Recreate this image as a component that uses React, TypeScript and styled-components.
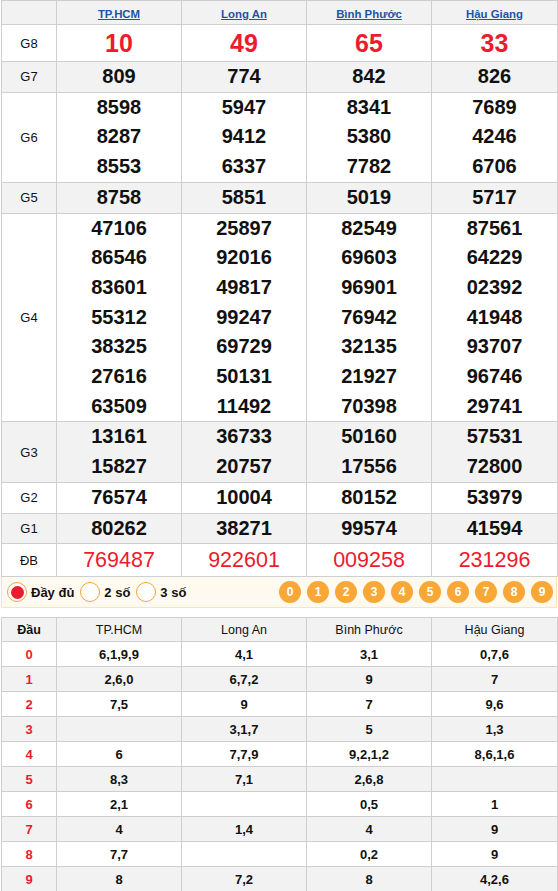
import React from "react";
import styled, { createGlobalStyle } from "styled-components";

const Global = createGlobalStyle`
  html, body { margin: 0; padding: 0; background: #fff; }
  body { font-family: "Liberation Sans", Arial, sans-serif; color: #000; }
`;

const RED = "#ec1b2e";
const GREY = "#f2f2f2";
const BORDER = "#cfcfcf";

const Page = styled.div`
  width: 556px;
  padding: 0 1px;
`;

const Table = styled.table`
  width: 556px;
  table-layout: fixed;
  border-collapse: collapse;
  font-family: "Liberation Sans", Arial, sans-serif;
`;

const Row = styled.tr<{ $grey?: boolean }>`
  background: ${(p) => (p.$grey ? GREY : "#fff")};
`;

const HeadCell = styled.th<{ $h: number }>`
  border: 1px solid ${BORDER};
  height: ${(p) => p.$h}px;
  padding: 0;
  text-align: center;
  vertical-align: middle;
  font-weight: normal;
`;

const ProvinceLink = styled.a`
  color: #1b55a6;
  font-size: 11.4px;
  font-weight: bold;
  text-decoration: underline;
`;

const LabelCell = styled.td`
  border: 1px solid ${BORDER};
  padding: 0;
  text-align: center;
  vertical-align: middle;
  font-size: 13px;
  color: #111;
`;

const NumCell = styled.td`
  border: 1px solid ${BORDER};
  padding: 0;
  text-align: center;
  vertical-align: middle;
`;

const Num = styled.div<{ $kind: "g8" | "db" | "normal" }>`
  font-weight: ${(p) => (p.$kind === "db" ? "normal" : "bold")};
  font-size: ${(p) => (p.$kind === "g8" ? "25px" : p.$kind === "db" ? "21.5px" : "20px")};
  line-height: ${(p) => (p.$kind === "g8" ? "36px" : p.$kind === "db" ? "32px" : "29.7px")};
  color: ${(p) => (p.$kind === "normal" ? "#111" : RED)};
`;

const FilterBar = styled.div`
  display: flex;
  align-items: center;
  height: 30px;
  background: #fffaf0;
  border: 1px solid #fde2bb;
  border-top: none;
  padding: 0 3px 0 5px;
`;

const RadioOption = styled.label`
  display: flex;
  align-items: center;
  gap: 4px;
  margin-right: 6px;
  font-size: 13px;
  font-weight: bold;
  color: #111;
`;

const RadioCircle = styled.span<{ $checked?: boolean }>`
  box-sizing: border-box;
  width: 20px;
  height: 20px;
  border-radius: 50%;
  border: 1px solid #f5a53a;
  background: #fff;
  display: flex;
  align-items: center;
  justify-content: center;
  &::after {
    content: "";
    display: ${(p) => (p.$checked ? "block" : "none")};
    width: 13px;
    height: 13px;
    border-radius: 50%;
    background: ${RED};
  }
`;

const Balls = styled.div`
  margin-left: auto;
  display: flex;
  gap: 6px;
`;

const Ball = styled.span`
  width: 22px;
  height: 22px;
  border-radius: 50%;
  background: #f9a736;
  color: #fff;
  font-size: 12px;
  font-weight: bold;
  display: flex;
  align-items: center;
  justify-content: center;
`;

const Spacer = styled.div`
  height: 9px;
`;

const LotoHead = styled.th<{ $bold?: boolean }>`
  border: 1px solid ${BORDER};
  height: 23px;
  padding: 0;
  text-align: center;
  vertical-align: middle;
  font-size: 12.5px;
  font-weight: ${(p) => (p.$bold ? "bold" : "normal")};
  color: #111;
`;

const LotoCell = styled.td<{ $red?: boolean }>`
  border: 1px solid ${BORDER};
  height: 24px;
  padding: 0;
  text-align: center;
  vertical-align: middle;
  font-size: 13px;
  font-weight: bold;
  color: ${(p) => (p.$red ? RED : "#111")};
`;

const provinces = ["TP.HCM", "Long An", "Bình Phước", "Hậu Giang"];

type Prize = { label: string; kind: "g8" | "db" | "normal"; values: string[][] };

const prizes: Prize[] = [
  { label: "G8", kind: "g8", values: [["10"], ["49"], ["65"], ["33"]] },
  { label: "G7", kind: "normal", values: [["809"], ["774"], ["842"], ["826"]] },
  {
    label: "G6",
    kind: "normal",
    values: [
      ["8598", "8287", "8553"],
      ["5947", "9412", "6337"],
      ["8341", "5380", "7782"],
      ["7689", "4246", "6706"],
    ],
  },
  { label: "G5", kind: "normal", values: [["8758"], ["5851"], ["5019"], ["5717"]] },
  {
    label: "G4",
    kind: "normal",
    values: [
      ["47106", "86546", "83601", "55312", "38325", "27616", "63509"],
      ["25897", "92016", "49817", "99247", "69729", "50131", "11492"],
      ["82549", "69603", "96901", "76942", "32135", "21927", "70398"],
      ["87561", "64229", "02392", "41948", "93707", "96746", "29741"],
    ],
  },
  {
    label: "G3",
    kind: "normal",
    values: [
      ["13161", "15827"],
      ["36733", "20757"],
      ["50160", "17556"],
      ["57531", "72800"],
    ],
  },
  { label: "G2", kind: "normal", values: [["76574"], ["10004"], ["80152"], ["53979"]] },
  { label: "G1", kind: "normal", values: [["80262"], ["38271"], ["99574"], ["41594"]] },
  { label: "ĐB", kind: "db", values: [["769487"], ["922601"], ["009258"], ["231296"]] },
];

const loto: string[][] = [
  ["6,1,9,9", "4,1", "3,1", "0,7,6"],
  ["2,6,0", "6,7,2", "9", "7"],
  ["7,5", "9", "7", "9,6"],
  ["", "3,1,7", "5", "1,3"],
  ["6", "7,7,9", "9,2,1,2", "8,6,1,6"],
  ["8,3", "7,1", "2,6,8", ""],
  ["2,1", "", "0,5", "1"],
  ["4", "1,4", "4", "9"],
  ["7,7", "", "0,2", "9"],
  ["8", "7,2", "8", "4,2,6"],
];

const Cols = () => (
  <colgroup>
    <col style={{ width: 55 }} />
    <col style={{ width: 125 }} />
    <col style={{ width: 125 }} />
    <col style={{ width: 125 }} />
    <col style={{ width: 126 }} />
  </colgroup>
);

export default function App() {
  return (
    <Page>
      <Global />
      <Table>
        <Cols />
        <thead>
          <Row $grey>
            <HeadCell $h={23} />
            {provinces.map((p) => (
              <HeadCell $h={23} key={p}>
                <ProvinceLink href="#">{p}</ProvinceLink>
              </HeadCell>
            ))}
          </Row>
        </thead>
        <tbody>
          {prizes.map((pr, i) => (
            <Row key={pr.label} $grey={i % 2 === 1}>
              <LabelCell>{pr.label}</LabelCell>
              {pr.values.map((col, j) => (
                <NumCell key={j}>
                  {col.map((n, k) => (
                    <Num key={k} $kind={pr.kind}>
                      {n}
                    </Num>
                  ))}
                </NumCell>
              ))}
            </Row>
          ))}
        </tbody>
      </Table>
      <FilterBar>
        <RadioOption>
          <RadioCircle $checked />
          Đầy đủ
        </RadioOption>
        <RadioOption>
          <RadioCircle />2 số
        </RadioOption>
        <RadioOption>
          <RadioCircle />3 số
        </RadioOption>
        <Balls>
          {Array.from({ length: 10 }, (_, i) => (
            <Ball key={i}>{i}</Ball>
          ))}
        </Balls>
      </FilterBar>
      <Spacer />
      <Table>
        <Cols />
        <thead>
          <Row $grey>
            <LotoHead $bold>Đầu</LotoHead>
            {provinces.map((p) => (
              <LotoHead key={p}>{p}</LotoHead>
            ))}
          </Row>
        </thead>
        <tbody>
          {loto.map((r, i) => (
            <Row key={i} $grey={i % 2 === 1}>
              <LotoCell $red>{i}</LotoCell>
              {r.map((v, j) => (
                <LotoCell key={j}>{v}</LotoCell>
              ))}
            </Row>
          ))}
        </tbody>
      </Table>
    </Page>
  );
}
